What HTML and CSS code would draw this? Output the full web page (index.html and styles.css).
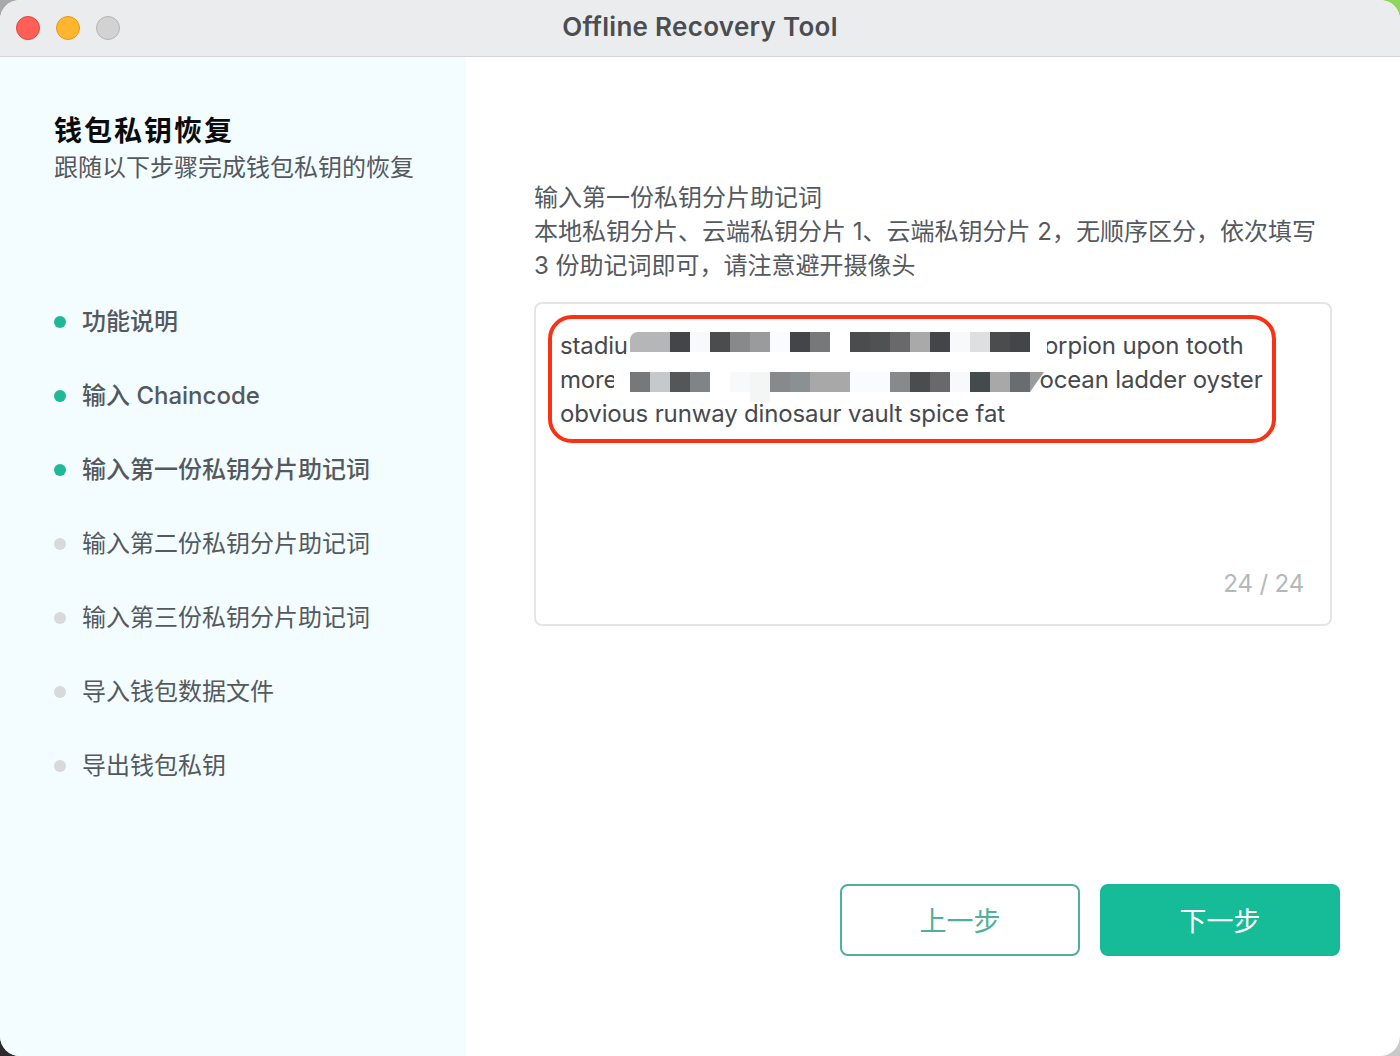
FILE: index.html
```html
<!DOCTYPE html>
<html lang="zh-CN">
<head>
<meta charset="utf-8">
<title>Offline Recovery Tool</title>
<link rel="stylesheet" href="styles.css">
</head>
<body>
<div class="window">
  <header class="titlebar">
    <div class="lights">
      <span class="light red"></span>
      <span class="light amber"></span>
      <span class="light grey"></span>
    </div>
    <div class="title">Offline Recovery Tool</div>
  </header>
  <div class="main">
    <aside class="sidebar">
      <h1 class="side-title">钱包私钥恢复</h1>
      <p class="side-sub">跟随以下步骤完成钱包私钥的恢复</p>
      <ul class="steps">
        <li class="step done">功能说明</li>
        <li class="step done">输入 Chaincode</li>
        <li class="step done">输入第一份私钥分片助记词</li>
        <li class="step">输入第二份私钥分片助记词</li>
        <li class="step">输入第三份私钥分片助记词</li>
        <li class="step">导入钱包数据文件</li>
        <li class="step">导出钱包私钥</li>
      </ul>
    </aside>
    <section class="content">
      <div class="intro">
        <p>输入第一份私钥分片助记词</p>
        <p>本地私钥分片、云端私钥分片 1、云端私钥分片 2，无顺序区分，依次填写</p>
        <p>3 份助记词即可，请注意避开摄像头</p>
      </div>
      <div class="editor">
        <div class="words">
          <div class="word-line"><span>stadium</span><span class="tail-a">scorpion upon tooth</span></div>
          <div class="word-line"><span>more</span><span class="tail-b">ocean ladder oyster</span></div>
          <div class="word-line"><span>obvious runway dinosaur vault spice fat</span></div>
          <div class="mosaic mosaic-a">
            <i class="c w40 m1 first"></i><i class="c m2"></i><i class="c m3"></i><i class="c m4"></i><i class="c m5"></i><i class="c m6"></i><i class="c m7"></i><i class="c m2"></i><i class="c m8"></i><i class="c m0"></i><i class="c m4"></i><i class="c m9"></i><i class="c m10"></i><i class="c m11"></i><i class="c m2"></i><i class="c m3"></i><i class="c m12"></i><i class="c m4"></i><i class="c m2"></i><i class="c end"></i>
          </div>
          <div class="mosaic mosaic-b">
            <i class="c w16 m0"></i><i class="c m8"></i><i class="c m13"></i><i class="c m14"></i><i class="c m15"></i><i class="c m0"></i><i class="c m3"></i><i class="c m16"></i><i class="c m5"></i><i class="c m17"></i><i class="c w40 m18"></i><i class="c m7"></i><i class="c m7"></i><i class="c m5"></i><i class="c m4"></i><i class="c m10"></i><i class="c m3"></i><i class="c m19"></i><i class="c m18"></i><i class="c m20"></i><i class="c end2"></i>
          </div>
        </div>
        <div class="red-box"></div>
        <div class="count">24 / 24</div>
      </div>
      <div class="actions">
        <button class="btn ghost">上一步</button>
        <button class="btn solid">下一步</button>
      </div>
    </section>
  </div>
</div>
</body>
</html>
```

FILE: styles.css
```css
* { box-sizing: border-box; }
html, body { margin: 0; height: 100%; }
body {
  font-family: Inter, "Noto Sans CJK SC", sans-serif;
  overflow: hidden;
  background:
    linear-gradient(#a9a9a9, #a9a9a9) left top / 24px 24px no-repeat,
    linear-gradient(#8fd65a, #8fd65a) right top / 24px 24px no-repeat,
    linear-gradient(#2b2b2b, #2b2b2b) left bottom / 24px 24px no-repeat,
    linear-gradient(#c9c9c9, #c9c9c9) right bottom / 24px 24px no-repeat,
    #fff;
}
.window { width: 1400px; height: 1056px; display: flex; flex-direction: column; background: #fff; border-radius: 20px; overflow: hidden; }
.titlebar { height: 57px; flex: none; position: relative; background: #ebecee; border-bottom: 1px solid #d2d4d5; display: flex; align-items: center; justify-content: center; }
.lights { position: absolute; left: 16px; top: 16px; display: flex; gap: 16px; }
.light { width: 24px; height: 24px; border-radius: 50%; border: 1px solid; }
.red { background: #ff5f57; border-color: #e0443e; }
.amber { background: #ffb62e; border-color: #dd9a25; }
.grey { background: #d2d2d3; border-color: #b4b4b5; }
.title { font-size: 26px; line-height: 32px; font-weight: 600; letter-spacing: 0.3px; color: #4b4d50; margin-top: -2px; }
.main { flex: 1; display: flex; min-height: 0; }
.sidebar { width: 466px; flex: none; background: #f3fcff; padding: 55px 0 0 54px; }
.side-title { margin: 0; font-size: 28px; line-height: 38px; font-weight: 700; letter-spacing: 2px; color: #0c0c0c; }
.side-sub { margin: 0; font-size: 24px; line-height: 36px; color: #54595e; }
.steps { list-style: none; margin: 119px 0 0; padding: 0; }
.step { position: relative; height: 74px; padding-left: 28px; font-size: 24px; line-height: 34px; color: #54595e; }
.step::before { content: ""; position: absolute; left: 0; top: 11px; width: 12px; height: 12px; border-radius: 50%; background: #d8d9da; }
.step.done { font-weight: 500; }
.step.done::before { background: #1fb998; }
.content { flex: 1; padding: 124px 60px 0 68px; display: flex; flex-direction: column; }
.intro { font-size: 24px; line-height: 34px; color: #54595e; }
.intro p { margin: 0; }
.editor { position: relative; width: 798px; height: 324px; margin-top: 19px; border: 2px solid #e4e5e6; border-radius: 8px; }
.words { position: relative; padding: 25px 0 0 24px; font-size: 24px; line-height: 34px; letter-spacing: -0.15px; color: #46494d; }
.word-line { white-space: nowrap; display: flex; }
.tail-a { margin-left: 369px; }
.tail-b { margin-left: 422px; }
.mosaic { position: absolute; display: flex; align-items: flex-start; height: 20px; }
.mosaic-a { left: 94px; top: 28px; }
.mosaic-b { left: 78px; top: 68px; }
.mosaic::after { content: ""; position: absolute; left: 0; right: 0; top: 20px; height: 6px; background: #fff; }
.mosaic-a::after { left: -4px; }
.c { display: block; position: relative; z-index: 1; width: 20px; height: 20px; flex: none; }
.c.w40 { width: 40px; }
.c.w16 { width: 16px; }
.first { border-top-left-radius: 8px; box-shadow: -3px 0 0 #fff; }
.end { width: 17px; background: #fff; }
.end2 { width: 14px; background: #9a9b9c; clip-path: polygon(0 0, 100% 0, 0 100%); }
.m0 { background: #fff; }
.m1 { background: #b5b6b7; }
.m2 { background: #444548; }
.m3 { background: #f8f9fb; }
.m4 { background: #4b4c4e; }
.m5 { background: #88898b; }
.m6 { background: #9a9b9c; }
.m7 { background: #fafbfe; }
.m8 { background: #77787a; }
.m9 { background: #505153; }
.m10 { background: #69696b; }
.m11 { background: #a9a9aa; }
.m12 { background: #dddfe0; }
.m13 { background: #c5c9cb; }
.m14 { background: #555658; }
.m15 { background: #808487; }
.c.m16 { background: #f4f5f5; height: 30px; }
.m17 { background: #8b9093; }
.m18 { background: #a8a8a9; }
.m19 { background: #454a4c; }
.m20 { background: #6a6d70; }
.red-box { position: absolute; left: 12px; top: 11px; width: 728px; height: 128px; border: 4px solid #f93216; border-radius: 24px; }
.count { position: absolute; right: 26px; bottom: 23px; font-size: 24px; line-height: 34px; letter-spacing: -0.15px; color: #b4b8ba; }
.actions { margin-top: 258px; display: flex; justify-content: flex-end; gap: 20px; }
.btn { width: 240px; height: 72px; border-radius: 8px; font: inherit; font-size: 27px; line-height: 34px; padding: 4px 0 0; cursor: pointer; }
.ghost { background: #fff; border: 2px solid #4fb09a; color: #4fb09a; }
.solid { background: #16bb97; border: 2px solid #1bb598; color: #fff; }
```
